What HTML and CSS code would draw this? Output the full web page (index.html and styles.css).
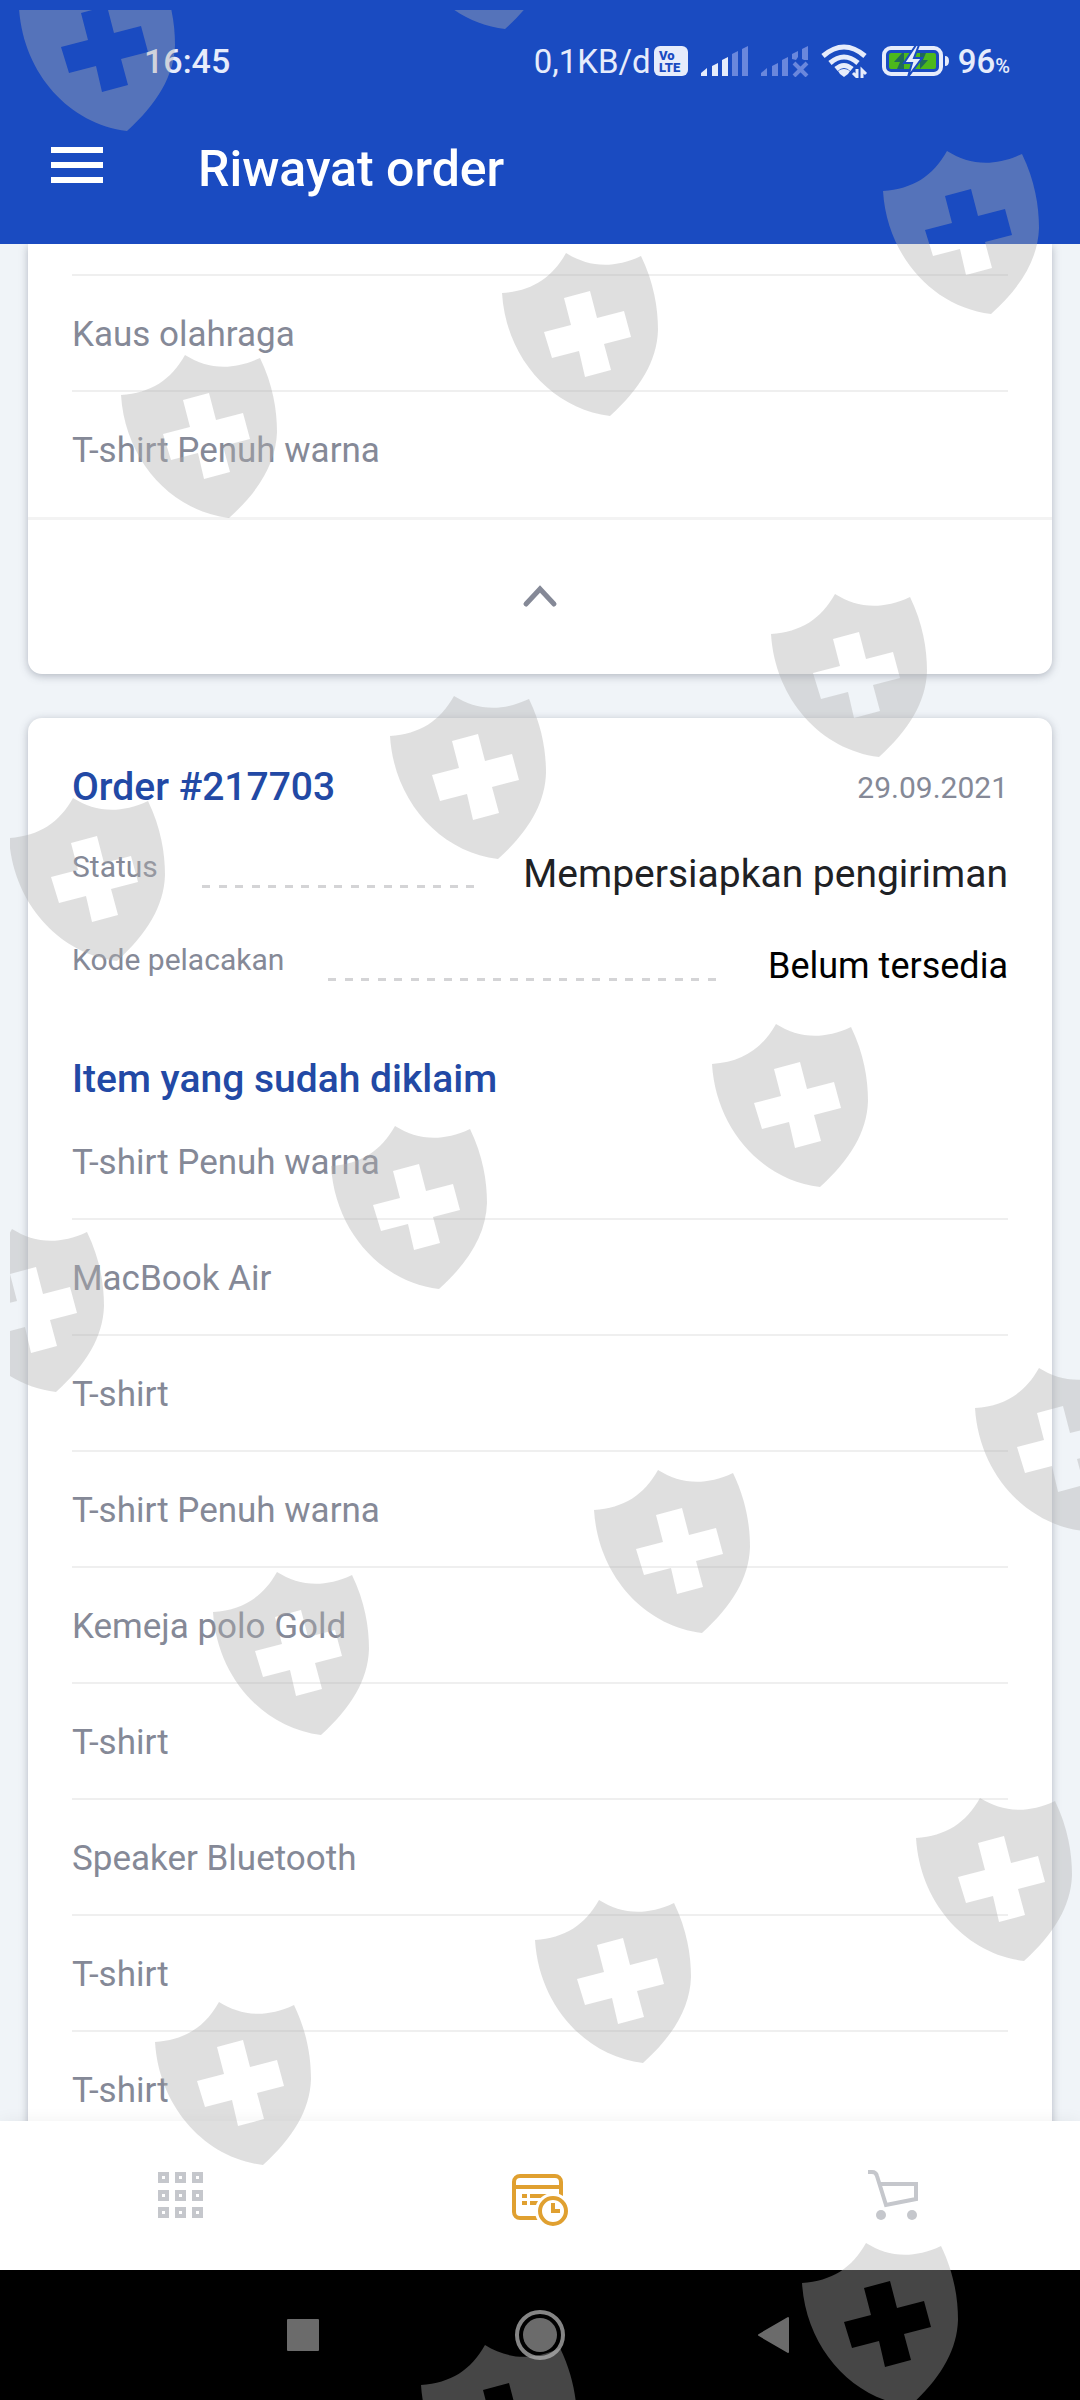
FILE: index.html
```
<!DOCTYPE html>
<html lang="id">
<head>
<meta charset="UTF-8">
<meta name="viewport" content="width=device-width, initial-scale=1">
<title>Riwayat order</title>
<link rel="stylesheet" href="styles.css">
</head>
<body>
<div class="screen">

    <header class="header">
        <div class="status-bar">
            <span class="clock">16:45</span>
            <div class="status-icons">
                <div class="network">
                    <span>0,1KB/d</span>
                    <svg width="35" height="30" viewBox="0 0 35 30">
                        <rect x="0" y="0" width="34" height="30" rx="6" fill="#e6ecfb"/>
                        <text class="volte" x="5" y="14">Vo</text>
                        <text class="volte" x="5" y="26">LTE</text>
                    </svg>
                </div>
                <svg width="48" height="32" viewBox="0 0 48 32">
                    <g fill="#e6ecfb">
                        <path d="M0 31V28L6 23V31Z"/>
                        <path d="M11 31V21L17 18V31Z"/>
                        <path d="M21 31V15L27 12V31Z"/>
                    </g>
                    <g fill="#6a87dc">
                        <path d="M31 31V9L37 6V31Z"/>
                        <path d="M41 31V4L47 1V31Z"/>
                    </g>
                </svg>
                <svg width="48" height="32" viewBox="0 0 48 32">
                    <g fill="#6a87dc">
                        <path d="M0 31V28L6 23V31Z"/>
                        <path d="M11 31V21L17 18V31Z"/>
                        <path d="M21 31V15L27 12V31Z"/>
                        <path d="M31 14V9L37 6V12L35 15Z"/>
                        <path d="M41 14V4L47 1V15H43Z"/>
                    </g>
                    <path d="M33 18L46 31M46 18L33 31" stroke="#6a87dc" stroke-width="4"/>
                </svg>
                <svg width="49" height="34" viewBox="0 0 49 34">
                    <g fill="none" stroke="#e6ecfb" stroke-width="5">
                        <path d="M2 12Q23 -6 44 12"/>
                        <path d="M9 19Q23 7 37 19"/>
                        <path d="M15 25Q23 18 31 25"/>
                    </g>
                    <path d="M17 27Q23 23 29 27L27 30L23 33L19 30Z" fill="#e6ecfb"/>
                    <path d="M36 25V33L32 29M41 34V26L45 30" fill="none" stroke="#e6ecfb" stroke-width="3"/>
                </svg>
                <div class="battery">
                    <svg width="68" height="36" viewBox="0 0 68 36">
                        <rect x="2" y="5" width="57" height="26" rx="7" fill="none" stroke="#e6ecfb" stroke-width="4"/>
                        <rect x="7" y="10" width="47" height="16" rx="2" fill="#4cb81c"/>
                        <path d="M63 13Q67 13 67 18T63 23Z" fill="#e6ecfb"/>
                        <path d="M20 10L12 19H18L15 26H22V10ZM38 26L46 17H41L44 10H38Z" fill="#1f6a5a"/>
                        <path d="M34 2L22 20H30L26 34L40 15H32L37 2Z" fill="#e6ecfb" stroke="#1a4bc1" stroke-width="2"/>
                    </svg>
                    <span>96<small>%</small></span>
                </div>
            </div>
        </div>
        <div class="toolbar">
            <button class="menu-btn" aria-label="Menu">
                <span></span><span></span><span></span>
            </button>
            <h1>Riwayat order</h1>
        </div>
    </header>

    <main class="content">
        <section class="card card-open">
            <ul class="items">
                <li>Kaus olahraga</li>
                <li>T-shirt Penuh warna</li>
            </ul>
            <button class="collapse-btn" aria-label="Tutup">
                <svg width="36" height="24" viewBox="0 0 36 24">
                    <path d="M4 19L18 4L32 19" fill="none" stroke="#858997" stroke-width="5" stroke-linecap="round"/>
                </svg>
            </button>
        </section>

        <section class="card card-order">
            <div class="order-head">
                <h2>Order #217703</h2>
                <time datetime="2021-09-29">29.09.2021</time>
            </div>
            <dl class="details">
                <div class="detail">
                    <dt>Status</dt>
                    <dd class="status">Mempersiapkan pengiriman</dd>
                </div>
                <div class="detail">
                    <dt>Kode pelacakan</dt>
                    <dd>Belum tersedia</dd>
                </div>
            </dl>
            <h2 class="items-title">Item yang sudah diklaim</h2>
            <ul class="items">
                <li>T-shirt Penuh warna</li>
                <li>MacBook Air</li>
                <li>T-shirt</li>
                <li>T-shirt Penuh warna</li>
                <li>Kemeja polo Gold</li>
                <li>T-shirt</li>
                <li>Speaker Bluetooth</li>
                <li>T-shirt</li>
                <li>T-shirt</li>
            </ul>
        </section>
    </main>

    <nav class="tabs">
        <button aria-label="Katalog">
            <svg width="64" height="64" viewBox="0 0 64 64" fill="none" stroke="#c5c7cc" stroke-width="4">
                <rect x="12" y="10" width="7" height="7"/>
                <rect x="29" y="10" width="7" height="7"/>
                <rect x="46" y="10" width="7" height="7"/>
                <rect x="12" y="28" width="7" height="7"/>
                <rect x="29" y="28" width="7" height="7"/>
                <rect x="46" y="28" width="7" height="7"/>
                <rect x="12" y="45" width="7" height="7"/>
                <rect x="29" y="45" width="7" height="7"/>
                <rect x="46" y="45" width="7" height="7"/>
            </svg>
        </button>
        <button aria-label="Riwayat order">
            <svg width="64" height="64" viewBox="0 0 64 64" fill="none" stroke="#e0a030" stroke-width="4">
                <rect x="6" y="12" width="47" height="42" rx="6"/>
                <path d="M6 23H53"/>
                <path d="M14 32H19M22 32H40M14 39H19M22 39H34"/>
                <circle cx="45" cy="47" r="18" fill="#fff" stroke="none"/>
                <circle cx="45" cy="47" r="13"/>
                <path d="M45 39V47H52"/>
            </svg>
        </button>
        <button aria-label="Keranjang">
            <svg width="64" height="64" viewBox="0 0 64 64" fill="none" stroke="#c5c7cc" stroke-width="4">
                <path d="M0 8H4Q8 8 9 12L18 41L48 35V20H11"/>
                <g fill="#c5c7cc" stroke="none">
                    <circle cx="13" cy="51" r="5"/>
                    <circle cx="44" cy="51" r="5"/>
                </g>
            </svg>
        </button>
    </nav>

    <div class="system-nav">
        <button aria-label="Recent">
            <svg width="52" height="52" viewBox="0 0 52 52"><rect x="10" y="10" width="32" height="32" rx="1" fill="#6b6b6b"/></svg>
        </button>
        <button aria-label="Home">
            <svg width="52" height="52" viewBox="0 0 52 52">
                <circle cx="26" cy="26" r="23" fill="none" stroke="#858585" stroke-width="4"/>
                <circle cx="26" cy="26" r="17" fill="#6b6b6b"/>
            </svg>
        </button>
        <button aria-label="Back">
            <svg width="52" height="52" viewBox="0 0 52 52"><path d="M8 26L37 9V43Z" fill="#6b6b6b" stroke="#6b6b6b" stroke-width="2" stroke-linejoin="round"/></svg>
        </button>
    </div>

    <!-- shield watermark -->
    <svg class="watermark" viewBox="0 0 1080 2400" aria-hidden="true">
        <defs>
            <path id="shield" fill-rule="evenodd" d="M0 40C30 38 50 25 64 0C85 13 109 17 139 3C152 30 156 55 156 77C155 108 138 136 108 163C50 156 4 105 0 40Z
                M62 45L88 38L95 65L122 58L129 84L102 91L109 117L83 124L77 98L50 105L42 79L69 72Z"/>
            <clipPath id="area"><rect x="10" y="10" width="1070" height="2390"/></clipPath>
        </defs>
        <g clip-path="url(#area)">
            <use href="#shield" x="19" y="-32"/>
            <use href="#shield" x="397" y="-134"/>
            <use href="#shield" x="883" y="151"/>
            <use href="#shield" x="502" y="253"/>
            <use href="#shield" x="121" y="355"/>
            <use href="#shield" x="771" y="594"/>
            <use href="#shield" x="390" y="696"/>
            <use href="#shield" x="9" y="798"/>
            <use href="#shield" x="712" y="1024"/>
            <use href="#shield" x="331" y="1126"/>
            <use href="#shield" x="-52" y="1229"/>
            <use href="#shield" x="975" y="1368"/>
            <use href="#shield" x="594" y="1470"/>
            <use href="#shield" x="213" y="1572"/>
            <use href="#shield" x="916" y="1798"/>
            <use href="#shield" x="535" y="1900"/>
            <use href="#shield" x="155" y="2002"/>
            <use href="#shield" x="802" y="2243"/>
            <use href="#shield" x="421" y="2345"/>
        </g>
    </svg>
</div>
</body>
</html>
```
FILE: styles.css
```
* {
    box-sizing: border-box;
}
body {
    margin: 0;
    font-family: Roboto, "Liberation Sans", sans-serif;
    background-color: #f0f4f8;
}
h1, h2, ul, dl, dd {
    margin: 0;
    padding: 0;
}
button {
    border: none;
    padding: 0;
    background: none;
    cursor: pointer;
}
svg {
    display: block;
}

.screen {
    position: relative;
    display: flex;
    flex-direction: column;
    height: 100vh;
    overflow: hidden;
}

/* Header */
.header {
    background-color: #1a4bc1;
    color: #fff;
    padding-bottom: 32px;
}
.status-bar {
    display: flex;
    justify-content: space-between;
    align-items: center;
    height: 122px;
    padding: 0 70px 0 144px;
    font-size: 34px;
    font-weight: 500;
    color: #e6ecfb;
}
.status-icons {
    display: flex;
    align-items: center;
    gap: 12px;
}
.network {
    display: flex;
    align-items: center;
    gap: 3px;
}
.network span {
    font-size: 33px;
    font-weight: 400;
}
.volte {
    font-size: 13px;
    font-weight: 900;
    fill: #1a4bc1;
}
.battery {
    display: flex;
    align-items: center;
    gap: 8px;
}
.battery span {
    font-size: 33px;
}
.battery small {
    font-size: 20px;
}
.toolbar {
    display: flex;
    align-items: center;
    height: 90px;
    padding: 4px 51px 0;
    gap: 95px;
}
.toolbar h1 {
    font-size: 50px;
    font-weight: 500;
    line-height: 60px;
}
.menu-btn {
    display: flex;
    flex-direction: column;
    gap: 9px;
    padding-bottom: 8px;
}
.menu-btn span {
    width: 52px;
    height: 6px;
    background-color: #fff;
}

/* Cards */
.content {
    flex: 1;
    min-height: 0;
    overflow: hidden;
    padding: 0 28px;
}
.card {
    padding: 0 44px;
    background-color: #fff;
    border-radius: 14px;
    box-shadow: 0 2px 8px rgba(60, 70, 90, 0.35);
}
.card-open {
    border-radius: 0 0 14px 14px;
    padding: 30px 0 0;
    margin-bottom: 44px;
}
.card-open .items {
    margin: 0 44px;
    padding-bottom: 9px;
    border-top: 2px solid #efefef;
}
.card-order {
    padding-top: 44px;
}
.collapse-btn {
    display: flex;
    align-items: center;
    justify-content: center;
    width: 100%;
    height: 157px;
    border-top: 3px solid #f3f3f3;
}

.card h2 {
    font-size: 39px;
    font-weight: 500;
    line-height: 50px;
    color: #2249a5;
}
.order-head {
    display: flex;
    justify-content: space-between;
    align-items: center;
}
.order-head time {
    font-size: 30px;
    color: #858997;
}
.details {
    display: flex;
    flex-direction: column;
    gap: 43px;
    margin-top: 37px;
}
.detail {
    display: flex;
    align-items: flex-start;
    height: 50px;
}
.detail dt {
    flex: 1;
    display: flex;
    gap: 44px;
    font-size: 30px;
    line-height: 36px;
    color: #858997;
}
/* dashed leader between label and value */
.detail dt::after {
    content: "";
    flex: 1;
    height: 3px;
    margin-top: 36px;
    background: repeating-linear-gradient(90deg, #d4d4d6 0 8px, transparent 8px 17px, #d4d4d6 17px 25px, transparent 25px 33px);
}
.detail dd {
    margin-left: 48px;
    font-size: 36px;
    line-height: 48px;
    color: #000;
}
.detail dd.status {
    font-size: 39px;
    line-height: 50px;
    color: #202124;
}
.card .items-title {
    margin-top: 62px;
}

.items {
    list-style: none;
}
.items li {
    height: 116px;
    border-bottom: 2px solid #efefef;
    font-size: 35px;
    line-height: 118px;
    color: #858997;
}
.card-open .items li:last-child {
    border-bottom: none;
}

/* Bottom navigation */
.tabs {
    position: relative;
    display: flex;
    height: 149px;
    background-color: #fff;
    box-shadow: 0 0 16px rgba(0, 0, 0, 0.06);
}
.tabs button {
    flex: 1;
    display: flex;
    align-items: center;
    justify-content: center;
}
.system-nav {
    display: flex;
    justify-content: center;
    align-items: center;
    gap: 185px;
    height: 130px;
    background-color: #000;
}

.watermark {
    position: absolute;
    top: 0;
    left: 0;
    width: 100%;
    fill: #afafaf;
    fill-opacity: 0.4;
    pointer-events: none;
}
```
